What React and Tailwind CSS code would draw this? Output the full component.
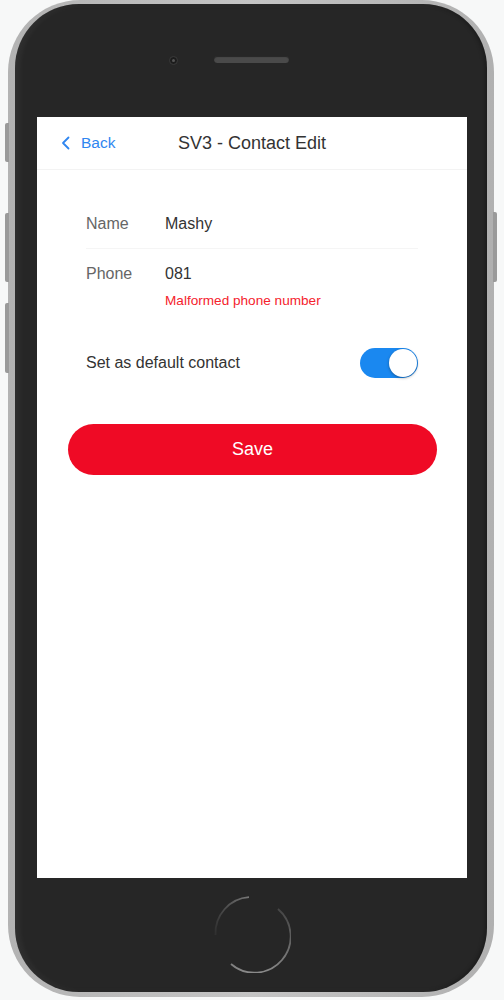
import React from "react";

function HomeButton() {
  return (
    <svg width="80" height="80" viewBox="0 0 80 80">
      <defs>
        <linearGradient id="hb1" x1="0" y1="1" x2="1" y2="0">
          <stop offset="0" stopColor="#555" stopOpacity="0.2" />
          <stop offset="1" stopColor="#777" />
        </linearGradient>
        <linearGradient id="hb2" x1="0" y1="0" x2="0" y2="1">
          <stop offset="0" stopColor="#666" stopOpacity="0.5" />
          <stop offset="1" stopColor="#8a8a8a" />
        </linearGradient>
      </defs>
      <path d="M 4.5 42 A 36 36 0 0 1 38 4.2" fill="none" stroke="url(#hb1)" strokeWidth="1.8" />
      <path d="M 67 16 A 36 36 0 0 1 20 71" fill="none" stroke="url(#hb2)" strokeWidth="1.8" />
    </svg>
  );
}

function Toggle() {
  return (
    <div className="relative w-[58px] h-[30px] rounded-full bg-[#1a88f0] shrink-0">
      <div className="absolute right-[1px] top-[1px] w-[28px] h-[28px] rounded-full bg-white shadow-[0_1px_3px_rgba(0,0,0,0.35)]" />
    </div>
  );
}

export default function App() {
  return (
    <div
      className="w-[504px] h-[1000px] bg-[#f7f8f8] pl-[8px] overflow-hidden"
      style={{ fontFamily: '"Liberation Sans", Arial, sans-serif' }}
    >
      <div className="relative w-[486px] h-[997px] rounded-[72px] bg-gradient-to-r from-[#b3b3b3] via-[#c4c4c4] to-[#b0b0b0] px-[7px] pt-[4px] pb-[5px]">
        {/* side buttons */}
        <div className="absolute left-[-3px] top-[123px] w-[4px] h-[39px] rounded-l-[2px] bg-[#9a9a9a]" />
        <div className="absolute left-[-3px] top-[213px] w-[4px] h-[69px] rounded-l-[2px] bg-[#9a9a9a]" />
        <div className="absolute left-[-3px] top-[303px] w-[4px] h-[70px] rounded-l-[2px] bg-[#9a9a9a]" />
        <div className="absolute right-[-3px] top-[212px] w-[4px] h-[70px] rounded-r-[2px] bg-[#9a9a9a]" />

        <div className="w-full h-full rounded-[64px] bg-[#262626] shadow-[inset_4px_0_6px_rgba(255,255,255,0.06),inset_-2px_0_4px_rgba(0,0,0,0.3)] flex flex-col pl-[22px] pr-[20px]">
          {/* top bezel */}
          <div className="h-[113px] flex items-start pt-[52px] pl-[132px] shrink-0">
            <div className="w-[9px] h-[9px] rounded-full bg-[#1c1c1c] border border-[#3a3a3a] flex items-center justify-center">
              <div className="w-[3px] h-[3px] rounded-full bg-[#555]" />
            </div>
            <div className="ml-[36px] w-[75px] h-[7px] rounded-full bg-[#4a4a4a] shadow-[inset_0_1px_1px_rgba(0,0,0,0.5)]" />
          </div>

          {/* screen */}
          <div className="h-[761px] bg-white flex flex-col shrink-0">
            <div className="h-[53px] border-b border-[#f3f3f3] flex items-center relative shrink-0">
              <div className="absolute left-[24px] top-0 h-full flex items-center gap-[10px] text-[#2f86f0] text-[15.5px]">
                <svg width="10" height="14" viewBox="0 0 10 14">
                  <path d="M7.5 1.5 L2 7 L7.5 12.5" fill="none" stroke="#2f86f0" strokeWidth="1.8" strokeLinecap="round" strokeLinejoin="round" />
                </svg>
                <span>Back</span>
              </div>
              <div className="w-full text-center text-[18px] text-[#333]">SV3 - Contact Edit</div>
            </div>

            <div className="px-[49px] pt-[29px] flex flex-col">
              <div className="h-[50px] flex items-center border-b border-[#f5f5f5] text-[16px]">
                <span className="w-[79px] text-[#666]">Name</span>
                <span className="text-[#333]">Mashy</span>
              </div>
              <div className="pt-[13px] flex text-[16px]">
                <span className="w-[79px] text-[#666] leading-[24px]">Phone</span>
                <div className="flex flex-col">
                  <span className="text-[#333] leading-[24px]">081</span>
                  <span className="mt-[6px] text-[13.6px] leading-[18px] text-[#f5222d]">Malformed phone number</span>
                </div>
              </div>
              <div className="mt-[38px] h-[30px] flex items-center justify-between text-[16px] text-[#333]">
                <span>Set as default contact</span>
                <Toggle />
              </div>
            </div>

            <div className="pl-[31px] pr-[30px] mt-[46px]">
              <div className="h-[51px] rounded-full bg-[#ef0a25] flex items-center justify-center text-white text-[18px]">
                Save
              </div>
            </div>
          </div>

          {/* bottom bezel */}
          <div className="flex-1 flex items-center justify-center pb-[4px] pr-[2px]">
            <HomeButton />
          </div>
        </div>
      </div>
    </div>
  );
}
